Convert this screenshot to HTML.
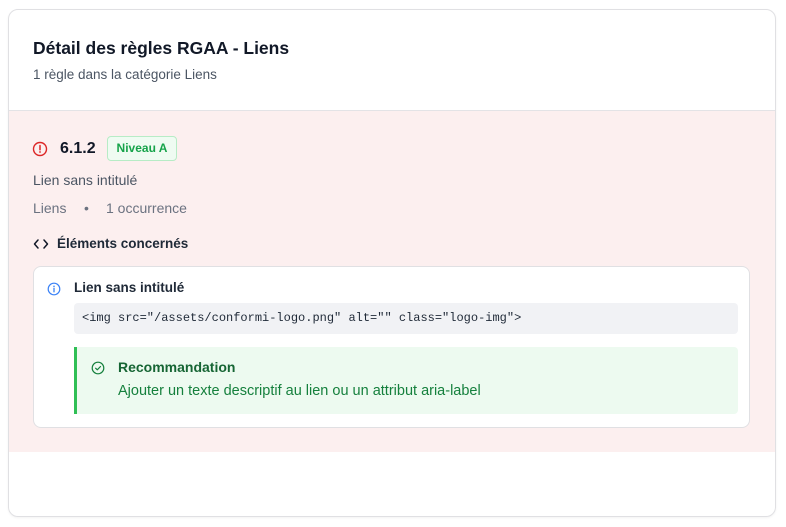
<!DOCTYPE html>
<html><head><meta charset="utf-8"><style>
*{box-sizing:border-box;margin:0;padding:0}
body{width:786px;height:527px;background:#fff;font-family:"Liberation Sans",sans-serif;color:#111827;position:relative;overflow:hidden}
.card{position:absolute;left:8px;top:9px;width:768px;height:508px;border:1px solid #e0e0e3;border-radius:10px;overflow:hidden;box-shadow:0 1px 2px rgba(0,0,0,.05)}
.hd{height:101px;border-bottom:1px solid #e3e3e6;padding:27px 24px 0}
.hd h1{font-size:17.5px;font-weight:bold;line-height:22px}
.hd p{font-size:13.5px;color:#4b5563;margin-top:8px}
.red{position:absolute;top:101px;left:0;right:0;height:341px;background:#fcefef}
.abs{position:absolute;white-space:nowrap}
.inner{position:absolute;left:24px;top:155px;width:717px;height:162px;background:#fff;border:1px solid #e0e0e3;border-radius:8px}
.code{position:absolute;left:40px;top:36px;width:664px;height:31px;background:#f1f2f5;border-radius:4px;font-family:"Liberation Mono",monospace;font-size:12px;line-height:31px;padding-left:8px;color:#1f2937}
.rec{position:absolute;left:40px;top:80px;width:664px;height:67px;background:#edfaf0;border-left:3px solid #2fbf55;border-radius:0 4px 4px 0}
</style></head><body>
<div class="card">
<div class="hd"><h1>Détail des règles RGAA - Liens</h1><p>1 règle dans la catégorie Liens</p></div>
<div class="red">
<svg class="abs" style="left:23px;top:30px" width="16" height="16" viewBox="0 0 16 16"><circle cx="8" cy="8" r="6.5" fill="none" stroke="#dc2626" stroke-width="1.4"/><path d="M8 4.5v4.2" stroke="#dc2626" stroke-width="1.5" stroke-linecap="round"/><circle cx="8" cy="11" r=".9" fill="#dc2626"/></svg>
<div class="abs" style="left:51px;top:28px;font-size:16px;font-weight:bold;line-height:20px">6.1.2</div>
<div class="abs" style="left:98px;top:25px;width:70px;height:25px;border:1px solid #b7ecc6;background:#effbf2;border-radius:4px;color:#16a34a;font-size:12px;font-weight:bold;text-align:center;line-height:23px">Niveau A</div>
<div class="abs" style="left:24px;top:61px;font-size:14px;color:#4b5563">Lien sans intitulé</div>
<div class="abs" style="left:24px;top:89px;font-size:14px;color:#6b7280">Liens</div>
<div class="abs" style="left:75px;top:89px;font-size:14px;color:#6b7280">•</div>
<div class="abs" style="left:97px;top:89px;font-size:14px;color:#6b7280">1 occurrence</div>
<svg class="abs" style="left:24px;top:127px" width="16" height="12" viewBox="0 0 16 12"><path d="M5 2L1.5 6 5 10M11 2l3.5 4L11 10" fill="none" stroke="#111827" stroke-width="1.5" stroke-linecap="round" stroke-linejoin="round"/></svg>
<div class="abs" style="left:48px;top:125px;font-size:13.5px;font-weight:bold;color:#1f2937">Éléments concernés</div>
<div class="inner">
<svg class="abs" style="left:13px;top:15px" width="14" height="14" viewBox="0 0 14 14"><circle cx="7" cy="7" r="5.8" fill="none" stroke="#3b82f6" stroke-width="1.2"/><path d="M7 6.3v3.5" stroke="#3b82f6" stroke-width="1.3" stroke-linecap="round"/><circle cx="7" cy="4.3" r=".8" fill="#3b82f6"/></svg>
<div class="abs" style="left:40px;top:13px;font-size:13.5px;font-weight:bold;color:#1f2937">Lien sans intitulé</div>
<div class="code">&lt;img src="/assets/conformi-logo.png" alt="" class="logo-img"&gt;</div>
<div class="rec">
<svg class="abs" style="left:14px;top:14px" width="14" height="14" viewBox="0 0 14 14"><circle cx="7" cy="7" r="5.8" fill="none" stroke="#15803d" stroke-width="1.2"/><path d="M4.6 7.2l1.7 1.6 3.2-3.3" fill="none" stroke="#15803d" stroke-width="1.2" stroke-linecap="round" stroke-linejoin="round"/></svg>
<div class="abs" style="left:41px;top:12px;font-size:14px;font-weight:bold;color:#166534">Recommandation</div>
<div class="abs" style="left:41px;top:36px;font-size:14.5px;color:#15803d">Ajouter un texte descriptif au lien ou un attribut aria-label</div>
</div>
</div>
</div>
</div>
</body></html>
